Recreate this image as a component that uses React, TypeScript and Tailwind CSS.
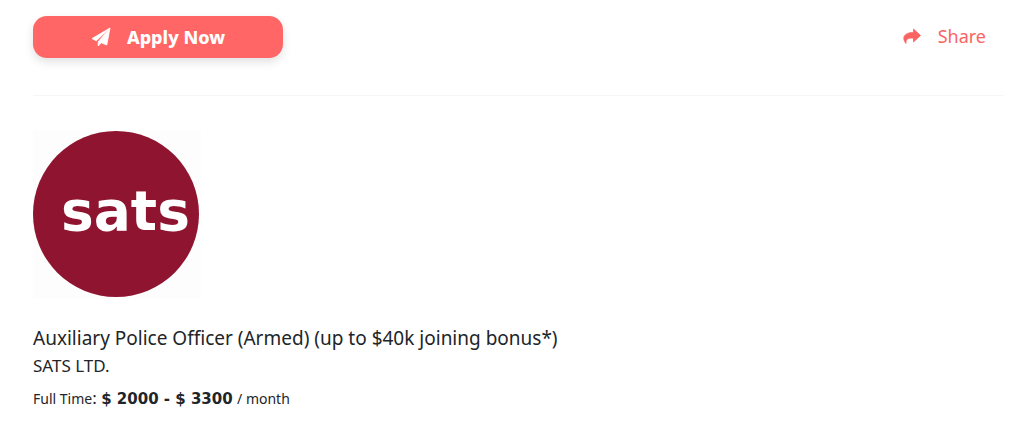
function PlaneIcon() {
  return (
    <svg viewBox="0 0 20 20" className="size-5" fill="currentColor" aria-hidden>
      <path
        d="M19 1 1 11.6 5.2 13.8ZM19 1 7.2 14.8V19L10.4 15.8 15.8 18Z"
        stroke="currentColor"
        strokeWidth="0.8"
        strokeLinejoin="round"
      />
    </svg>
  );
}

function ShareIcon() {
  return (
    <svg viewBox="0 0 20 20" className="size-5" fill="currentColor" aria-hidden>
      <path
        d="M11.5 3 18.5 9.5 11.5 16V12.2C6.5 11.8 3.6 12.8 4 17.5 0 12.5 1 6.7 11.5 6.4Z"
        stroke="currentColor"
        strokeWidth="0.8"
        strokeLinejoin="round"
      />
    </svg>
  );
}

function SatsLogo() {
  return (
    <svg viewBox="0 0 168 168" className="size-42" role="img" aria-label="sats">
      <rect width="168" height="168" fill="#fdfdfd" />
      <circle cx="83" cy="83" r="83" fill="#8e142f" />
      <text
        x="28"
        y="99"
        fontSize="55"
        fontWeight="700"
        fill="#fff"
        className="font-['DejaVu_Sans',sans-serif]"
      >
        sats
      </text>
    </svg>
  );
}

export default function App() {
  return (
    <main className="min-h-screen bg-white pr-5 pl-[33px] font-['Noto_Sans',sans-serif] text-[#212529]">
      <header className="flex items-start justify-between border-b border-[#f6f6f6] pt-4 pb-[37px]">
        <button
          type="button"
          className="flex h-[42px] w-[250px] items-center justify-center gap-4 rounded-[14px] bg-[#ff6665] text-lg font-extrabold text-white shadow-[0_4px_10px_rgba(0,0,0,0.12)]"
        >
          <PlaneIcon />
          Apply Now
        </button>
        <a href="#share" className="flex h-10 items-center gap-4 pr-[18px] text-lg text-[#f96463]">
          <ShareIcon />
          Share
        </a>
      </header>

      <section className="pt-[35px]">
        <SatsLogo />
        <h1 className="mt-[25px] text-[19px] leading-7">
          Auxiliary Police Officer (Armed) (up to $40k joining bonus*)
        </h1>
        <p className="text-[17px] leading-7">SATS LTD.</p>
        <p className="mt-1 text-[17px] leading-7">
          <span className="text-sm">Full Time</span>:{" "}
          <strong className="font-['DejaVu_Sans',sans-serif] text-[15px]">$ 2000 - $ 3300</strong>{" "}
          <span className="text-sm">/ month</span>
        </p>
      </section>
    </main>
  );
}
